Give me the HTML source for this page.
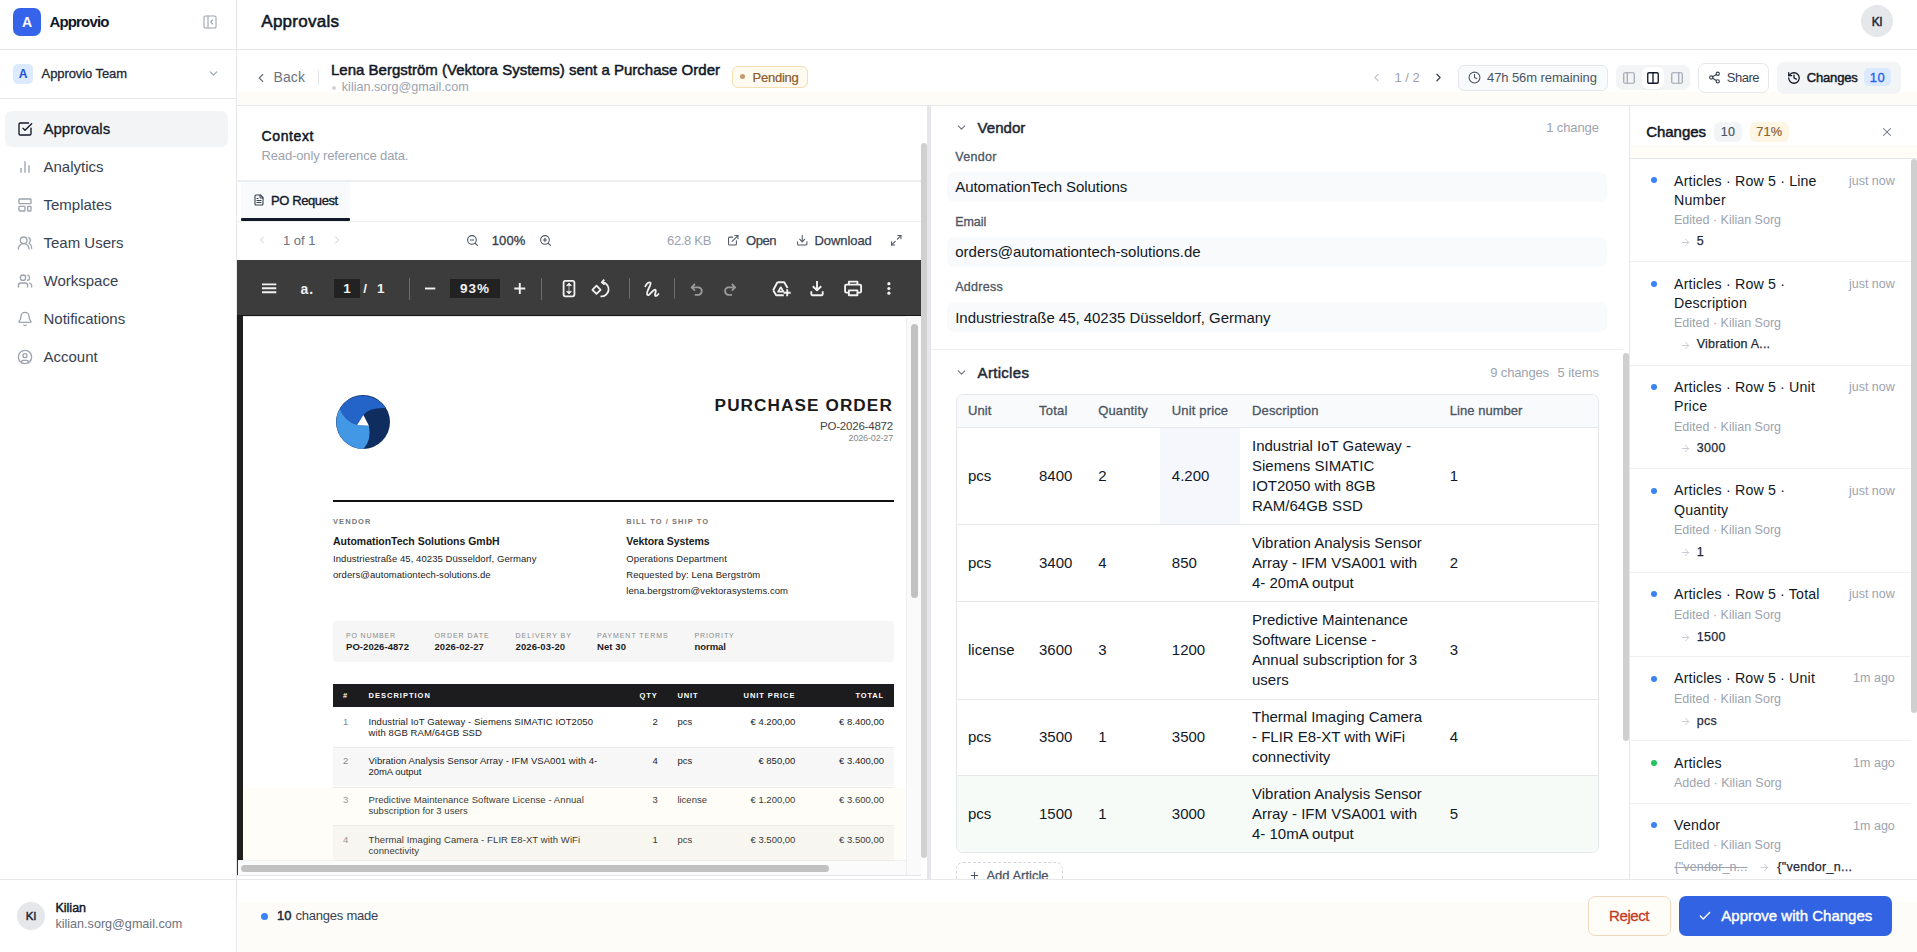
<!DOCTYPE html>
<html><head><meta charset="utf-8"><title>Approvio</title>
<style>
html,body{margin:0;padding:0;}
body{width:1917px;height:952px;position:relative;overflow:hidden;background:#fff;font-family:"Liberation Sans",sans-serif;}
.t{position:absolute;white-space:nowrap;line-height:1;}
.b{position:absolute;}
.i{position:absolute;overflow:visible;}
</style></head><body>
<div class="b" style="left:236px;top:0px;width:1px;height:952px;background:#e5e7eb;"></div>
<div class="b" style="left:13px;top:8px;width:28px;height:28px;background:#3563e9;border-radius:7px;"></div>
<div class="t" style="left:21.94px;top:15.15px;font-size:14px;color:#fff;font-weight:700;">A</div>
<div class="t" style="left:49.50px;top:14.30px;font-size:15px;color:#111827;font-weight:700;letter-spacing:-0.854px;">Approvio</div>
<svg class="i" style="left:202px;top:14px;" width="16" height="16" viewBox="0 0 24 24" fill="none" stroke="#9ca3af" stroke-width="1.6" stroke-linecap="round" stroke-linejoin="round"><rect width="18" height="18" x="3" y="3" rx="2"/><path d="M9 3v18"/><path d="m16 15-3-3 3-3"/></svg>
<div class="b" style="left:0px;top:49px;width:236px;height:1px;background:#e5e7eb;"></div>
<div class="b" style="left:13px;top:64px;width:20px;height:20px;background:#dbeafe;border-radius:5px;"></div>
<div class="t" style="left:18.67px;top:68.34px;font-size:12px;color:#1d4ed8;font-weight:700;">A</div>
<div class="t" style="left:41.60px;top:67.30px;font-size:13px;color:#1f2937;letter-spacing:-0.083px;-webkit-text-stroke:0.3px #1f2937;">Approvio Team</div>
<svg class="i" style="left:207px;top:67px;" width="13" height="13" viewBox="0 0 24 24" fill="none" stroke="#9ca3af" stroke-width="2" stroke-linecap="round" stroke-linejoin="round"><path d="m6 9 6 6 6-6"/></svg>
<div class="b" style="left:0px;top:98px;width:236px;height:1px;background:#e5e7eb;"></div>
<div class="b" style="left:5px;top:111px;width:223px;height:35.5px;background:#f3f4f6;border-radius:7px;"></div>
<svg class="i" style="left:16.5px;top:121px;" width="16" height="16" viewBox="0 0 24 24" fill="none" stroke="#111827" stroke-width="2" stroke-linecap="round" stroke-linejoin="round"><path d="M21 10.656V19a2 2 0 0 1-2 2H5a2 2 0 0 1-2-2V5a2 2 0 0 1 2-2h12.344"/><path d="m9 11 3 3L22 4"/></svg>
<div class="t" style="left:43.50px;top:120.70px;font-size:15px;color:#111827;-webkit-text-stroke:0.3px #111827;">Approvals</div>
<svg class="i" style="left:16.5px;top:159px;" width="16" height="16" viewBox="0 0 24 24" fill="none" stroke="#9ca3af" stroke-width="2" stroke-linecap="round" stroke-linejoin="round"><line x1="18" y1="20" x2="18" y2="10"/><line x1="12" y1="20" x2="12" y2="4"/><line x1="6" y1="20" x2="6" y2="14"/></svg>
<div class="t" style="left:43.50px;top:158.70px;font-size:15px;color:#374151;">Analytics</div>
<svg class="i" style="left:16.5px;top:197px;" width="16" height="16" viewBox="0 0 24 24" fill="none" stroke="#9ca3af" stroke-width="2" stroke-linecap="round" stroke-linejoin="round"><rect width="18" height="7" x="3" y="3" rx="1"/><rect width="9" height="7" x="3" y="14" rx="1"/><rect width="5" height="7" x="16" y="14" rx="1"/></svg>
<div class="t" style="left:43.50px;top:196.70px;font-size:15px;color:#374151;">Templates</div>
<svg class="i" style="left:16.5px;top:235px;" width="16" height="16" viewBox="0 0 24 24" fill="none" stroke="#9ca3af" stroke-width="2" stroke-linecap="round" stroke-linejoin="round"><path d="M18 21a8 8 0 0 0-16 0"/><circle cx="10" cy="8" r="5"/><path d="M22 20c0-3.37-2-6.5-4-8a5 5 0 0 0-.45-8.3"/></svg>
<div class="t" style="left:43.50px;top:234.70px;font-size:15px;color:#374151;">Team Users</div>
<svg class="i" style="left:16.5px;top:273px;" width="16" height="16" viewBox="0 0 24 24" fill="none" stroke="#9ca3af" stroke-width="2" stroke-linecap="round" stroke-linejoin="round"><path d="M16 21v-2a4 4 0 0 0-4-4H6a4 4 0 0 0-4 4v2"/><circle cx="9" cy="7" r="4"/><path d="M22 21v-2a4 4 0 0 0-3-3.87"/><path d="M16 3.13a4 4 0 0 1 0 7.75"/></svg>
<div class="t" style="left:43.50px;top:272.70px;font-size:15px;color:#374151;">Workspace</div>
<svg class="i" style="left:16.5px;top:311px;" width="16" height="16" viewBox="0 0 24 24" fill="none" stroke="#9ca3af" stroke-width="2" stroke-linecap="round" stroke-linejoin="round"><path d="M10.268 21a2 2 0 0 0 3.464 0"/><path d="M3.262 15.326A1 1 0 0 0 4 17h16a1 1 0 0 0 .74-1.673C19.41 13.956 18 12.499 18 8A6 6 0 0 0 6 8c0 4.499-1.411 5.956-2.738 7.326"/></svg>
<div class="t" style="left:43.50px;top:310.70px;font-size:15px;color:#374151;">Notifications</div>
<svg class="i" style="left:16.5px;top:349px;" width="16" height="16" viewBox="0 0 24 24" fill="none" stroke="#9ca3af" stroke-width="2" stroke-linecap="round" stroke-linejoin="round"><circle cx="12" cy="12" r="10"/><circle cx="12" cy="10" r="3"/><path d="M7 20.662V19a2 2 0 0 1 2-2h6a2 2 0 0 1 2 2v1.662"/></svg>
<div class="t" style="left:43.50px;top:348.70px;font-size:15px;color:#374151;">Account</div>
<div class="b" style="left:0px;top:879px;width:236px;height:1px;background:#e5e7eb;"></div>
<div class="b" style="left:17px;top:902px;width:28px;height:28px;background:#e5e7eb;border-radius:50%;"></div>
<div class="t" style="left:25.70px;top:910.87px;font-size:11.5px;color:#1f2937;letter-spacing:-0.133px;-webkit-text-stroke:0.45px #1f2937;">KI</div>
<div class="t" style="left:55.40px;top:902.32px;font-size:12.5px;color:#111827;letter-spacing:0.021px;-webkit-text-stroke:0.45px #111827;">Kilian</div>
<div class="t" style="left:55.40px;top:917.83px;font-size:12.6px;color:#6b7280;">kilian.sorg@gmail.com</div>
<div class="b" style="left:237px;top:49px;width:1680px;height:1px;background:#e5e7eb;"></div>
<div class="t" style="left:261.30px;top:12.71px;font-size:17px;color:#111827;letter-spacing:0.267px;-webkit-text-stroke:0.55px #111827;">Approvals</div>
<div class="b" style="left:1861px;top:5px;width:32px;height:32px;background:#e5e7eb;border-radius:50%;"></div>
<div class="t" style="left:1871.75px;top:15.74px;font-size:12px;color:#1f2937;letter-spacing:-0.419px;-webkit-text-stroke:0.45px #1f2937;">KI</div>
<div class="b" style="left:238px;top:92px;width:1679px;height:13px;background:#fefcf7;"></div>
<div class="b" style="left:237px;top:105px;width:1680px;height:1px;background:#e5e7eb;"></div>
<svg class="i" style="left:253.5px;top:71px;" width="14" height="14" viewBox="0 0 24 24" fill="none" stroke="#6b7280" stroke-width="2" stroke-linecap="round" stroke-linejoin="round"><path d="m15 18-6-6 6-6"/></svg>
<div class="t" style="left:273.50px;top:70.45px;font-size:14px;color:#6b7280;letter-spacing:0.094px;">Back</div>
<div class="b" style="left:318px;top:70px;width:1px;height:15px;background:#e5e7eb;"></div>
<div class="t" style="left:331.00px;top:61.50px;font-size:15px;color:#111827;letter-spacing:0.009px;-webkit-text-stroke:0.5px #111827;">Lena Bergström (Vektora Systems) sent a Purchase Order</div>
<div class="b" style="left:332px;top:86px;width:4px;height:4px;background:#d1d5db;border-radius:50%;"></div>
<div class="t" style="left:341.80px;top:80.93px;font-size:12.6px;color:#9ca3af;">kilian.sorg@gmail.com</div>
<div class="b" style="left:731.5px;top:66px;width:76.5px;height:22px;background:#fefaf0;border:1px solid #f6dfb0;border-radius:6px;box-sizing:border-box;"></div>
<div class="b" style="left:740px;top:74px;width:5px;height:5px;background:#c59a6a;border-radius:50%;"></div>
<div class="t" style="left:752.50px;top:70.80px;font-size:13px;color:#8a5a2b;letter-spacing:-0.244px;-webkit-text-stroke:0.2px #8a5a2b;">Pending</div>
<svg class="i" style="left:1370px;top:71px;" width="13" height="13" viewBox="0 0 24 24" fill="none" stroke="#c0c4cc" stroke-width="2" stroke-linecap="round" stroke-linejoin="round"><path d="m15 18-6-6 6-6"/></svg>
<div class="t" style="left:1394.60px;top:71.00px;font-size:13px;color:#9ca3af;letter-spacing:-0.039px;">1 / 2</div>
<svg class="i" style="left:1432px;top:71px;" width="13" height="13" viewBox="0 0 24 24" fill="none" stroke="#374151" stroke-width="2.2" stroke-linecap="round" stroke-linejoin="round"><path d="m9 18 6-6-6-6"/></svg>
<div class="b" style="left:1458px;top:64.5px;width:150px;height:26.0px;background:#f9fafb;border:1px solid #e5e7eb;border-radius:6px;box-sizing:border-box;"></div>
<svg class="i" style="left:1467.5px;top:70.5px;" width="13" height="13" viewBox="0 0 24 24" fill="none" stroke="#4b5563" stroke-width="2" stroke-linecap="round" stroke-linejoin="round"><circle cx="12" cy="12" r="10"/><polyline points="12 6 12 12 16 14"/></svg>
<div class="t" style="left:1487.00px;top:71.00px;font-size:13px;color:#4b5563;letter-spacing:-0.088px;">47h 56m remaining</div>
<div class="b" style="left:1616px;top:65px;width:74px;height:25px;background:#f3f4f6;border-radius:7px;"></div>
<div class="b" style="left:1642px;top:67px;width:22px;height:21.5px;background:#fff;border-radius:6px;box-shadow:0 1px 1px rgba(0,0,0,.04);"></div>
<svg class="i" style="left:1622px;top:70.5px;" width="14" height="14" viewBox="0 0 24 24" fill="none" stroke="#9ca3af" stroke-width="2" stroke-linecap="round" stroke-linejoin="round"><rect width="18" height="18" x="3" y="3" rx="2"/><path d="M9 3v18"/></svg>
<svg class="i" style="left:1646px;top:70.5px;" width="14" height="14" viewBox="0 0 24 24" fill="none" stroke="#111827" stroke-width="2.3" stroke-linecap="round" stroke-linejoin="round"><rect width="18" height="18" x="3" y="3" rx="2"/><path d="M12 3v18"/></svg>
<svg class="i" style="left:1670px;top:70.5px;" width="14" height="14" viewBox="0 0 24 24" fill="none" stroke="#9ca3af" stroke-width="2" stroke-linecap="round" stroke-linejoin="round"><rect width="18" height="18" x="3" y="3" rx="2"/><path d="M15 3v18"/></svg>
<div class="b" style="left:1698px;top:62.5px;width:70.5px;height:30.0px;background:#fff;border:1px solid #e5e7eb;border-radius:7px;box-sizing:border-box;"></div>
<svg class="i" style="left:1707.5px;top:70.5px;" width="13" height="13" viewBox="0 0 24 24" fill="none" stroke="#374151" stroke-width="2" stroke-linecap="round" stroke-linejoin="round"><circle cx="18" cy="5" r="3"/><circle cx="6" cy="12" r="3"/><circle cx="18" cy="19" r="3"/><line x1="8.59" x2="15.42" y1="13.51" y2="17.49"/><line x1="15.41" x2="8.59" y1="6.51" y2="10.49"/></svg>
<div class="t" style="left:1726.70px;top:71.00px;font-size:13px;color:#374151;letter-spacing:-0.478px;">Share</div>
<div class="b" style="left:1777px;top:62px;width:124px;height:31.5px;background:#f3f4f6;border-radius:7px;"></div>
<svg class="i" style="left:1786.5px;top:70.5px;" width="14" height="14" viewBox="0 0 24 24" fill="none" stroke="#111827" stroke-width="2.2" stroke-linecap="round" stroke-linejoin="round"><path d="M3 12a9 9 0 1 0 9-9 9.75 9.75 0 0 0-6.74 2.74L3 8"/><path d="M3 3v5h5"/><path d="M12 7v5l4 2"/></svg>
<div class="t" style="left:1806.80px;top:71.00px;font-size:13px;color:#111827;letter-spacing:-0.177px;-webkit-text-stroke:0.45px #111827;">Changes</div>
<div class="b" style="left:1864px;top:68px;width:27px;height:18px;background:#dbeafe;border-radius:5px;"></div>
<div class="t" style="left:1869.75px;top:70.80px;font-size:13px;color:#2563eb;letter-spacing:0.520px;-webkit-text-stroke:0.35px #2563eb;">10</div>
<!--MAIN-->
<div class="t" style="left:261.50px;top:129.15px;font-size:14px;color:#111827;letter-spacing:0.622px;-webkit-text-stroke:0.5px #111827;">Context</div>
<div class="t" style="left:261.50px;top:148.80px;font-size:13px;color:#9ca3af;letter-spacing:-0.141px;">Read-only reference data.</div>
<div class="b" style="left:237px;top:180px;width:684px;height:2px;background:#eceef1;"></div>
<div class="b" style="left:241px;top:182px;width:109px;height:36px;background:#f9fafb;"></div>
<div class="b" style="left:241px;top:218.3px;width:109px;height:2.299999999999983px;background:#111827;border-radius:1px;"></div>
<div class="b" style="left:237px;top:221px;width:684px;height:1px;background:#eef0f2;"></div>
<svg class="i" style="left:252.5px;top:193.5px;" width="12" height="12" viewBox="0 0 24 24" fill="none" stroke="#374151" stroke-width="2.2" stroke-linecap="round" stroke-linejoin="round"><path d="M15 2H6a2 2 0 0 0-2 2v16a2 2 0 0 0 2 2h12a2 2 0 0 0 2-2V7Z"/><path d="M14 2v4a2 2 0 0 0 2 2h4"/><path d="M10 9H8"/><path d="M16 13H8"/><path d="M16 17H8"/></svg>
<div class="t" style="left:271.00px;top:193.50px;font-size:13px;color:#111827;letter-spacing:-0.402px;-webkit-text-stroke:0.35px #111827;">PO Request</div>
<svg class="i" style="left:256px;top:234px;" width="12" height="12" viewBox="0 0 24 24" fill="none" stroke="#c5c9d0" stroke-width="2" stroke-linecap="round" stroke-linejoin="round"><path d="m15 18-6-6 6-6"/></svg>
<div class="t" style="left:283.00px;top:233.60px;font-size:13px;color:#6b7280;letter-spacing:-0.004px;">1 of 1</div>
<svg class="i" style="left:331px;top:234px;" width="12" height="12" viewBox="0 0 24 24" fill="none" stroke="#c5c9d0" stroke-width="2" stroke-linecap="round" stroke-linejoin="round"><path d="m9 18 6-6-6-6"/></svg>
<svg class="i" style="left:465.5px;top:233.5px;" width="13" height="13" viewBox="0 0 24 24" fill="none" stroke="#4b5563" stroke-width="2" stroke-linecap="round" stroke-linejoin="round"><circle cx="11" cy="11" r="8"/><line x1="21" x2="16.65" y1="21" y2="16.65"/><line x1="8" x2="14" y1="11" y2="11"/></svg>
<div class="t" style="left:491.70px;top:233.60px;font-size:13px;color:#374151;letter-spacing:0.138px;-webkit-text-stroke:0.35px #374151;">100%</div>
<svg class="i" style="left:539px;top:233.5px;" width="13" height="13" viewBox="0 0 24 24" fill="none" stroke="#4b5563" stroke-width="2" stroke-linecap="round" stroke-linejoin="round"><circle cx="11" cy="11" r="8"/><line x1="21" x2="16.65" y1="21" y2="16.65"/><line x1="8" x2="14" y1="11" y2="11"/><line x1="11" x2="11" y1="8" y2="14"/></svg>
<div class="t" style="left:667.00px;top:233.60px;font-size:13px;color:#9ca3af;letter-spacing:-0.322px;">62.8 KB</div>
<svg class="i" style="left:727px;top:233.5px;" width="12.5" height="12.5" viewBox="0 0 24 24" fill="none" stroke="#4b5563" stroke-width="2" stroke-linecap="round" stroke-linejoin="round"><path d="M15 3h6v6"/><path d="M10 14 21 3"/><path d="M18 13v6a2 2 0 0 1-2 2H5a2 2 0 0 1-2-2V8a2 2 0 0 1 2-2h6"/></svg>
<div class="t" style="left:746.00px;top:233.60px;font-size:13px;color:#374151;letter-spacing:-0.451px;-webkit-text-stroke:0.25px #374151;">Open</div>
<svg class="i" style="left:796px;top:233.5px;" width="12.5" height="12.5" viewBox="0 0 24 24" fill="none" stroke="#4b5563" stroke-width="2" stroke-linecap="round" stroke-linejoin="round"><path d="M21 15v4a2 2 0 0 1-2 2H5a2 2 0 0 1-2-2v-4"/><polyline points="7 10 12 15 17 10"/><line x1="12" x2="12" y1="15" y2="3"/></svg>
<div class="t" style="left:814.50px;top:233.60px;font-size:13px;color:#374151;letter-spacing:-0.077px;-webkit-text-stroke:0.25px #374151;">Download</div>
<svg class="i" style="left:890px;top:234px;" width="12.5" height="12.5" viewBox="0 0 24 24" fill="none" stroke="#4b5563" stroke-width="2" stroke-linecap="round" stroke-linejoin="round"><polyline points="15 3 21 3 21 9"/><polyline points="9 21 3 21 3 15"/><line x1="21" x2="14" y1="3" y2="10"/><line x1="3" x2="10" y1="21" y2="14"/></svg>
<div class="b" style="left:920.8px;top:142.5px;width:6.0px;height:715.5px;background:#d0d0d0;border-radius:3px;"></div>
<div class="b" style="left:927px;top:105px;width:4px;height:774px;background:#e6e7ea;"></div>
<div class="b" style="left:237px;top:260px;width:684px;height:56px;background:#3c3c3c;"></div>
<div class="b" style="left:237px;top:315px;width:684px;height:1px;background:#171717;"></div>
<div class="b" style="left:237px;top:316px;width:684px;height:560px;background:#f7f8f9;"></div>
<div class="b" style="left:237px;top:316px;width:6px;height:544px;background:#1f1f1f;"></div>
<div class="b" style="left:243px;top:316px;width:663px;height:544px;background:#ffffff;overflow:hidden;"></div>
<div class="b" style="left:243px;top:316px;width:663px;height:1px;background:rgba(60,60,80,0.12);"></div>
<div class="b" style="left:906px;top:318px;width:15px;height:558px;background:#fafafa;border-left:1px solid #eceef0;box-sizing:border-box;"></div>
<div class="b" style="left:910.5px;top:323.5px;width:7.5px;height:274.5px;background:#c1c1c1;border-radius:4px;"></div>
<div class="b" style="left:237px;top:860px;width:669px;height:16px;background:#fbfbfb;border-top:1px solid #eeeff1;box-sizing:border-box;"></div>
<div class="b" style="left:237px;top:860px;width:1px;height:15px;background:#333;"></div>
<div class="b" style="left:241px;top:864.5px;width:588px;height:7.7000000000000455px;background:#c1c1c1;border-radius:4px;"></div>
<div class="b" style="left:237px;top:875px;width:684px;height:1px;background:#e3e5e8;"></div>
<svg class="i" style="left:237px;top:260px" width="684" height="56" viewBox="237 260 684 56" fill="none" stroke="#f1f1f1" stroke-width="1.9" stroke-linecap="butt" stroke-linejoin="round"><path d="M262 284.4h14.3M262 288.3h14.3M262 292.3h14.3" stroke-width="1.9"/><rect x="563.6" y="280.8" width="10.8" height="15.5" rx="1.8" stroke-width="1.8"/><path d="M566.6 285.6 569 283 571.4 285.6Z M566.6 291.4 569 294 571.4 291.4Z" fill="#f1f1f1" stroke-width="0.8"/><path d="M569 286v5" stroke="#8a8a8a" stroke-width="1.6"/><path d="M592.4 289.8 596.5 285.7 600.6 289.8 596.5 293.9Z" stroke-width="1.8"/><path d="M602.5 282.2A7 7 0 1 1 600.5 296.3" stroke-width="1.8"/><path d="M604.3 279.6 601.8 282.3 604.6 284.6" stroke-width="1.8"/><path d="M629.5 278v20.7M674.5 278v20.7" stroke="#6d6d6d" stroke-width="1"/><path d="M645.3 286.3C647 283 649.5 281.5 650.5 282.8 651.8 284.6 645.5 292 647.3 294.8 648.8 297 653 289.3 655 289.6 657.5 290 653.5 295.8 655.6 296 656.8 296.1 657.8 295 658.5 294" stroke-width="1.8" stroke-linecap="round"/><path d="M695 283.9 691.6 287.3 695 290.6M691.8 287.3H699a4 4 0 0 1 0 7.6h-4.2" stroke="#9a9a9a" stroke-width="1.8"/><path d="M731.8 283.9 735.2 287.3 731.8 290.6M735 287.3H727.8a4 4 0 0 0 0 7.6h4.2" stroke="#9a9a9a" stroke-width="1.8"/><path d="M777.4 282.3H784.2L787.6 288M773.2 290.2 777.4 282.3M773.2 290.2 776.2 295.3H783.8" stroke-width="1.9"/><path d="M780.8 287.3 783.5 291.7H778.1Z" stroke-width="1.7"/><path d="M787.2 289.3v7M783.7 292.8h7" stroke-width="1.9"/><path d="M817 281.1v9M812.8 286.3 817 290.3 821.2 286.3" stroke-width="1.9"/><path d="M811.3 291.3v2.6a1.3 1.3 0 0 0 1.3 1.3h8.8a1.3 1.3 0 0 0 1.3-1.3v-2.6" stroke-width="1.9"/><path d="M848.9 284.6V281.6H857.4V284.6" stroke-width="1.9"/><path d="M848.6 292.6H846.4a1.3 1.3 0 0 1-1.3-1.3V286a1.3 1.3 0 0 1 1.3-1.4h13.4a1.3 1.3 0 0 1 1.3 1.4v5.3a1.3 1.3 0 0 1-1.3 1.3H857.6" stroke-width="1.9"/><rect x="848.9" y="290.4" width="8.5" height="4.8" stroke-width="1.9"/><circle cx="888.9" cy="283.7" r="1.6" fill="#f1f1f1" stroke="none"/><circle cx="888.9" cy="288.5" r="1.6" fill="#f1f1f1" stroke="none"/><circle cx="888.9" cy="293.2" r="1.6" fill="#f1f1f1" stroke="none"/><path d="M425 288.5h10.3" stroke-width="1.9"/><path d="M519.8 283v11M514.3 288.5h11" stroke-width="1.9"/></svg>
<div class="t" style="left:300.50px;top:281.95px;font-size:14px;color:#f1f1f1;font-weight:700;letter-spacing:0.912px;">a.</div>
<div class="b" style="left:334px;top:278.5px;width:26px;height:19.69999999999999px;background:#222;"></div>
<div class="t" style="left:343.25px;top:282.37px;font-size:13.5px;color:#f1f1f1;font-weight:700;">1</div>
<div class="t" style="left:363.30px;top:282.37px;font-size:13.5px;color:#f1f1f1;font-weight:700;">/</div>
<div class="t" style="left:377.00px;top:282.37px;font-size:13.5px;color:#f1f1f1;font-weight:700;">1</div>
<div class="b" style="left:409.3px;top:278px;width:1.0px;height:21.69999999999999px;background:#6d6d6d;"></div>
<div class="b" style="left:450px;top:278.5px;width:50px;height:19.69999999999999px;background:#222;"></div>
<div class="t" style="left:460.00px;top:282.37px;font-size:13.5px;color:#f1f1f1;font-weight:700;letter-spacing:0.993px;">93%</div>
<div class="b" style="left:540.5px;top:278px;width:1.0px;height:21.69999999999999px;background:#6d6d6d;"></div>
<!--PDFPAGE-->
<svg class="i" style="left:335.8px;top:394.9px" width="54" height="54" viewBox="0 0 54 54"><circle cx="27" cy="27" r="27" fill="#0f2d5e"/><path d="M3.8 13.7 A27 27 0 0 1 49.5 13.0 Q32.95 12.5 27.4 20.0 L21.1 29.9 Q8.55 26.2 3.8 13.7Z" fill="#2463c7"/><path d="M3.8 13.7 Q8.55 26.2 21.1 29.9 L32.9 30.7 Q35.65 45.3 27.4 53.9 A27 27 0 0 1 3.8 13.7Z" fill="#4398e6"/><path d="M21.1 29.9 L27.4 20.0 L32.9 30.7Z" fill="#fff"/></svg>
<div class="t" style="left:714.60px;top:396.84px;font-size:17.2px;color:#1a1a1a;font-weight:700;letter-spacing:1.070px;">PURCHASE ORDER</div>
<div class="t" style="left:820.00px;top:421.07px;font-size:11.5px;color:#444;letter-spacing:-0.204px;">PO-2026-4872</div>
<div class="t" style="left:848.60px;top:434.18px;font-size:9px;color:#888;letter-spacing:-0.164px;">2026-02-27</div>
<div class="b" style="left:333px;top:499.8px;width:561px;height:2.0px;background:#111;"></div>
<div class="t" style="left:333.00px;top:517.95px;font-size:7.5px;color:#777;font-weight:700;letter-spacing:1.069px;">VENDOR</div>
<div class="t" style="left:626.30px;top:517.95px;font-size:7.5px;color:#777;font-weight:700;letter-spacing:1.054px;">BILL TO / SHIP TO</div>
<div class="t" style="left:333.00px;top:535.71px;font-size:10.5px;color:#1a1a1a;font-weight:700;letter-spacing:-0.021px;">AutomationTech Solutions GmbH</div>
<div class="t" style="left:333.00px;top:553.56px;font-size:9.5px;color:#222;letter-spacing:0.063px;">Industriestraße 45, 40235 Düsseldorf, Germany</div>
<div class="t" style="left:333.00px;top:569.86px;font-size:9.5px;color:#222;letter-spacing:0.065px;">orders@automationtech-solutions.de</div>
<div class="t" style="left:626.30px;top:535.71px;font-size:10.5px;color:#1a1a1a;font-weight:700;letter-spacing:-0.050px;">Vektora Systems</div>
<div class="t" style="left:626.30px;top:553.56px;font-size:9.5px;color:#222;letter-spacing:0.088px;">Operations Department</div>
<div class="t" style="left:626.30px;top:569.86px;font-size:9.5px;color:#222;letter-spacing:0.089px;">Requested by: Lena Bergström</div>
<div class="t" style="left:626.30px;top:586.16px;font-size:9.5px;color:#222;letter-spacing:0.067px;">lena.bergstrom@vektorasystems.com</div>
<div class="b" style="left:333px;top:621px;width:561px;height:40.5px;background:#f6f6f7;border-radius:4px;"></div>
<div class="t" style="left:346.00px;top:631.67px;font-size:7px;color:#8a8a8a;letter-spacing:0.845px;">PO NUMBER</div>
<div class="t" style="left:346.00px;top:641.56px;font-size:9.5px;color:#1a1a1a;font-weight:700;letter-spacing:0.056px;">PO-2026-4872</div>
<div class="t" style="left:434.40px;top:631.67px;font-size:7px;color:#8a8a8a;letter-spacing:0.993px;">ORDER DATE</div>
<div class="t" style="left:434.40px;top:641.56px;font-size:9.5px;color:#1a1a1a;font-weight:700;letter-spacing:0.090px;">2026-02-27</div>
<div class="t" style="left:515.50px;top:631.67px;font-size:7px;color:#8a8a8a;letter-spacing:0.977px;">DELIVERY BY</div>
<div class="t" style="left:515.50px;top:641.56px;font-size:9.5px;color:#1a1a1a;font-weight:700;letter-spacing:0.110px;">2026-03-20</div>
<div class="t" style="left:597.00px;top:631.67px;font-size:7px;color:#8a8a8a;letter-spacing:0.977px;">PAYMENT TERMS</div>
<div class="t" style="left:597.00px;top:641.56px;font-size:9.5px;color:#1a1a1a;font-weight:700;letter-spacing:0.081px;">Net 30</div>
<div class="t" style="left:694.40px;top:631.67px;font-size:7px;color:#8a8a8a;letter-spacing:0.905px;">PRIORITY</div>
<div class="t" style="left:694.40px;top:641.56px;font-size:9.5px;color:#1a1a1a;font-weight:700;letter-spacing:-0.012px;">normal</div>
<div class="b" style="left:333px;top:684px;width:561px;height:23.200000000000045px;background:#1c1c1f;"></div>
<div class="t" style="left:343.00px;top:692.15px;font-size:7.5px;color:#ffffff;font-weight:700;">#</div>
<div class="t" style="left:368.50px;top:692.15px;font-size:7.5px;color:#ffffff;font-weight:700;letter-spacing:1.013px;">DESCRIPTION</div>
<div class="t" style="left:639.40px;top:692.15px;font-size:7.5px;color:#ffffff;font-weight:700;letter-spacing:0.994px;">QTY</div>
<div class="t" style="left:677.40px;top:692.15px;font-size:7.5px;color:#ffffff;font-weight:700;letter-spacing:0.926px;">UNIT</div>
<div class="t" style="left:743.60px;top:692.15px;font-size:7.5px;color:#ffffff;font-weight:700;letter-spacing:0.930px;">UNIT PRICE</div>
<div class="t" style="left:855.50px;top:692.15px;font-size:7.5px;color:#ffffff;font-weight:700;letter-spacing:0.840px;">TOTAL</div>
<div class="b" style="left:333px;top:707.2px;width:561px;height:39.39999999999998px;background:#ffffff;"></div>
<div class="b" style="left:333px;top:746.6px;width:561px;height:1.0px;background:#ececee;"></div>
<div class="t" style="left:343.00px;top:716.96px;font-size:9.5px;color:#888;">1</div>
<div class="t" style="left:368.50px;top:716.96px;font-size:9.5px;color:#222;letter-spacing:0.087px;">Industrial IoT Gateway - Siemens SIMATIC IOT2050</div>
<div class="t" style="left:368.50px;top:727.96px;font-size:9.5px;color:#222;letter-spacing:0.100px;">with 8GB RAM/64GB SSD</div>
<div class="t" style="left:652.52px;top:716.96px;font-size:9.5px;color:#222;">2</div>
<div class="t" style="left:677.40px;top:716.96px;font-size:9.5px;color:#222;">pcs</div>
<div class="t" style="left:750.50px;top:716.96px;font-size:9.5px;color:#222;">€ 4.200,00</div>
<div class="t" style="left:839.10px;top:716.96px;font-size:9.5px;color:#222;">€ 8.400,00</div>
<div class="b" style="left:333px;top:747.6px;width:561px;height:38.89999999999998px;background:#f7f7f8;"></div>
<div class="b" style="left:333px;top:786.5px;width:561px;height:1.0px;background:#ececee;"></div>
<div class="t" style="left:343.00px;top:755.56px;font-size:9.5px;color:#888;">2</div>
<div class="t" style="left:368.50px;top:755.56px;font-size:9.5px;color:#222;letter-spacing:0.068px;">Vibration Analysis Sensor Array - IFM VSA001 with 4-</div>
<div class="t" style="left:368.50px;top:766.56px;font-size:9.5px;color:#222;letter-spacing:-0.050px;">20mA output</div>
<div class="t" style="left:652.52px;top:755.56px;font-size:9.5px;color:#222;">4</div>
<div class="t" style="left:677.40px;top:755.56px;font-size:9.5px;color:#222;">pcs</div>
<div class="t" style="left:758.42px;top:755.56px;font-size:9.5px;color:#222;">€ 850,00</div>
<div class="t" style="left:839.10px;top:755.56px;font-size:9.5px;color:#222;">€ 3.400,00</div>
<div class="b" style="left:333px;top:787.5px;width:561px;height:37.700000000000045px;background:#ffffff;"></div>
<div class="b" style="left:333px;top:825.2px;width:561px;height:1.0px;background:#ececee;"></div>
<div class="t" style="left:343.00px;top:794.76px;font-size:9.5px;color:#888;">3</div>
<div class="t" style="left:368.50px;top:794.76px;font-size:9.5px;color:#222;letter-spacing:0.076px;">Predictive Maintenance Software License - Annual</div>
<div class="t" style="left:368.50px;top:805.76px;font-size:9.5px;color:#222;letter-spacing:0.045px;">subscription for 3 users</div>
<div class="t" style="left:652.52px;top:794.76px;font-size:9.5px;color:#222;">3</div>
<div class="t" style="left:677.40px;top:794.76px;font-size:9.5px;color:#222;">license</div>
<div class="t" style="left:750.50px;top:794.76px;font-size:9.5px;color:#222;">€ 1.200,00</div>
<div class="t" style="left:839.10px;top:794.76px;font-size:9.5px;color:#222;">€ 3.600,00</div>
<div class="b" style="left:333px;top:826.2px;width:561px;height:33.799999999999955px;background:#f7f7f8;"></div>
<div class="b" style="left:333px;top:860px;width:561px;height:1px;background:#ececee;"></div>
<div class="t" style="left:343.00px;top:834.56px;font-size:9.5px;color:#888;">4</div>
<div class="t" style="left:368.50px;top:834.56px;font-size:9.5px;color:#222;letter-spacing:0.098px;">Thermal Imaging Camera - FLIR E8-XT with WiFi</div>
<div class="t" style="left:368.50px;top:845.56px;font-size:9.5px;color:#222;letter-spacing:0.072px;">connectivity</div>
<div class="t" style="left:652.52px;top:834.56px;font-size:9.5px;color:#222;">1</div>
<div class="t" style="left:677.40px;top:834.56px;font-size:9.5px;color:#222;">pcs</div>
<div class="t" style="left:750.50px;top:834.56px;font-size:9.5px;color:#222;">€ 3.500,00</div>
<div class="t" style="left:839.10px;top:834.56px;font-size:9.5px;color:#222;">€ 3.500,00</div>
<div class="b" style="left:243px;top:788px;width:663px;height:72px;background:rgba(250,240,200,0.12);"></div>
<!--MIDDLE-->
<svg class="i" style="left:955px;top:121px;" width="13" height="13" viewBox="0 0 24 24" fill="none" stroke="#6b7280" stroke-width="2" stroke-linecap="round" stroke-linejoin="round"><path d="m6 9 6 6 6-6"/></svg>
<div class="t" style="left:977.60px;top:120.30px;font-size:15px;color:#1f2937;letter-spacing:0.043px;-webkit-text-stroke:0.5px #1f2937;">Vendor</div>
<div class="t" style="left:1546.20px;top:120.80px;font-size:13px;color:#9ca3af;letter-spacing:-0.112px;">1 change</div>
<div class="t" style="left:955.20px;top:151.22px;font-size:12.5px;color:#4b5563;letter-spacing:0.330px;-webkit-text-stroke:0.3px #4b5563;">Vendor</div>
<div class="b" style="left:947px;top:171.7px;width:660px;height:30.5px;background:#f9fafb;border-radius:7px;"></div>
<div class="t" style="left:955.20px;top:179.30px;font-size:15px;color:#111827;letter-spacing:-0.060px;">AutomationTech Solutions</div>
<div class="t" style="left:955.20px;top:216.32px;font-size:12.5px;color:#4b5563;letter-spacing:-0.052px;-webkit-text-stroke:0.3px #4b5563;">Email</div>
<div class="b" style="left:947px;top:236.8px;width:660px;height:30.5px;background:#f9fafb;border-radius:7px;"></div>
<div class="t" style="left:955.20px;top:244.40px;font-size:15px;color:#111827;letter-spacing:0.004px;">orders@automationtech-solutions.de</div>
<div class="t" style="left:955.20px;top:281.42px;font-size:12.5px;color:#4b5563;letter-spacing:0.278px;-webkit-text-stroke:0.3px #4b5563;">Address</div>
<div class="b" style="left:947px;top:302.3px;width:660px;height:30.099999999999966px;background:#f9fafb;border-radius:7px;"></div>
<div class="t" style="left:955.20px;top:309.90px;font-size:15px;color:#111827;letter-spacing:-0.034px;">Industriestraße 45, 40235 Düsseldorf, Germany</div>
<div class="b" style="left:931px;top:349px;width:692px;height:1px;background:#eceef1;"></div>
<div class="b" style="left:1623px;top:353px;width:6px;height:387.5px;background:#cfcfcf;border-radius:3px;"></div>
<svg class="i" style="left:955px;top:366px;" width="13" height="13" viewBox="0 0 24 24" fill="none" stroke="#6b7280" stroke-width="2" stroke-linecap="round" stroke-linejoin="round"><path d="m6 9 6 6 6-6"/></svg>
<div class="t" style="left:977.60px;top:364.90px;font-size:15px;color:#1f2937;letter-spacing:0.303px;-webkit-text-stroke:0.5px #1f2937;">Articles</div>
<div class="t" style="left:1490.20px;top:365.50px;font-size:13px;color:#9ca3af;letter-spacing:-0.133px;">9 changes</div>
<div class="t" style="left:1557.60px;top:365.50px;font-size:13px;color:#9ca3af;letter-spacing:-0.100px;">5 items</div>
<div class="b" style="left:955.5px;top:394px;width:643.5px;height:459px;border:1px solid #e5e7eb;border-radius:7px;box-sizing:border-box;background:#fff;overflow:hidden;"></div>
<div class="b" style="left:956.5px;top:395px;width:641.5px;height:32px;background:#f9fafb;border-radius:6px 6px 0 0;"></div>
<div class="b" style="left:956px;top:427px;width:642.5px;height:1px;background:#e5e7eb;"></div>
<div class="t" style="left:968.00px;top:404.10px;font-size:13px;color:#4b5563;letter-spacing:0.095px;-webkit-text-stroke:0.3px #4b5563;">Unit</div>
<div class="t" style="left:1039.00px;top:404.10px;font-size:13px;color:#4b5563;letter-spacing:0.228px;-webkit-text-stroke:0.3px #4b5563;">Total</div>
<div class="t" style="left:1098.20px;top:404.10px;font-size:13px;color:#4b5563;letter-spacing:0.148px;-webkit-text-stroke:0.3px #4b5563;">Quantity</div>
<div class="t" style="left:1171.80px;top:404.10px;font-size:13px;color:#4b5563;letter-spacing:0.149px;-webkit-text-stroke:0.3px #4b5563;">Unit price</div>
<div class="t" style="left:1252.00px;top:404.10px;font-size:13px;color:#4b5563;letter-spacing:0.143px;-webkit-text-stroke:0.3px #4b5563;">Description</div>
<div class="t" style="left:1449.80px;top:404.10px;font-size:13px;color:#4b5563;letter-spacing:0.030px;-webkit-text-stroke:0.3px #4b5563;">Line number</div>
<div class="b" style="left:1159.6px;top:428px;width:80.60000000000014px;height:96px;background:#f5f7fc;"></div>
<div class="t" style="left:968.00px;top:467.90px;font-size:15px;color:#111827;">pcs</div>
<div class="t" style="left:1039.00px;top:467.90px;font-size:15px;color:#111827;">8400</div>
<div class="t" style="left:1098.20px;top:467.90px;font-size:15px;color:#111827;">2</div>
<div class="t" style="left:1171.80px;top:467.90px;font-size:15px;color:#111827;">4.200</div>
<div class="t" style="left:1449.80px;top:467.90px;font-size:15px;color:#111827;">1</div>
<div class="t" style="left:1252.00px;top:438.30px;font-size:15px;color:#111827;">Industrial IoT Gateway -</div>
<div class="t" style="left:1252.00px;top:458.30px;font-size:15px;color:#111827;">Siemens SIMATIC</div>
<div class="t" style="left:1252.00px;top:478.30px;font-size:15px;color:#111827;">IOT2050 with 8GB</div>
<div class="t" style="left:1252.00px;top:498.30px;font-size:15px;color:#111827;">RAM/64GB SSD</div>
<div class="b" style="left:956px;top:524px;width:642.5px;height:1px;background:#e5e7eb;"></div>
<div class="t" style="left:968.00px;top:555.30px;font-size:15px;color:#111827;">pcs</div>
<div class="t" style="left:1039.00px;top:555.30px;font-size:15px;color:#111827;">3400</div>
<div class="t" style="left:1098.20px;top:555.30px;font-size:15px;color:#111827;">4</div>
<div class="t" style="left:1171.80px;top:555.30px;font-size:15px;color:#111827;">850</div>
<div class="t" style="left:1449.80px;top:555.30px;font-size:15px;color:#111827;">2</div>
<div class="t" style="left:1252.00px;top:535.10px;font-size:15px;color:#111827;">Vibration Analysis Sensor</div>
<div class="t" style="left:1252.00px;top:555.10px;font-size:15px;color:#111827;">Array - IFM VSA001 with</div>
<div class="t" style="left:1252.00px;top:575.10px;font-size:15px;color:#111827;">4- 20mA output</div>
<div class="b" style="left:956px;top:601.2px;width:642.5px;height:1.0px;background:#e5e7eb;"></div>
<div class="t" style="left:968.00px;top:641.70px;font-size:15px;color:#111827;">license</div>
<div class="t" style="left:1039.00px;top:641.70px;font-size:15px;color:#111827;">3600</div>
<div class="t" style="left:1098.20px;top:641.70px;font-size:15px;color:#111827;">3</div>
<div class="t" style="left:1171.80px;top:641.70px;font-size:15px;color:#111827;">1200</div>
<div class="t" style="left:1449.80px;top:641.70px;font-size:15px;color:#111827;">3</div>
<div class="t" style="left:1252.00px;top:612.30px;font-size:15px;color:#111827;">Predictive Maintenance</div>
<div class="t" style="left:1252.00px;top:632.30px;font-size:15px;color:#111827;">Software License -</div>
<div class="t" style="left:1252.00px;top:652.30px;font-size:15px;color:#111827;">Annual subscription for 3</div>
<div class="t" style="left:1252.00px;top:672.30px;font-size:15px;color:#111827;">users</div>
<div class="b" style="left:956px;top:698.6px;width:642.5px;height:1.0px;background:#e5e7eb;"></div>
<div class="t" style="left:968.00px;top:728.90px;font-size:15px;color:#111827;">pcs</div>
<div class="t" style="left:1039.00px;top:728.90px;font-size:15px;color:#111827;">3500</div>
<div class="t" style="left:1098.20px;top:728.90px;font-size:15px;color:#111827;">1</div>
<div class="t" style="left:1171.80px;top:728.90px;font-size:15px;color:#111827;">3500</div>
<div class="t" style="left:1449.80px;top:728.90px;font-size:15px;color:#111827;">4</div>
<div class="t" style="left:1252.00px;top:708.70px;font-size:15px;color:#111827;">Thermal Imaging Camera</div>
<div class="t" style="left:1252.00px;top:728.70px;font-size:15px;color:#111827;">- FLIR E8-XT with WiFi</div>
<div class="t" style="left:1252.00px;top:748.70px;font-size:15px;color:#111827;">connectivity</div>
<div class="b" style="left:956.5px;top:776.4px;width:641.5px;height:75.60000000000002px;background:#f6fbf8;border-radius:0 0 6px 6px;"></div>
<div class="b" style="left:956px;top:775.4px;width:642.5px;height:1.0px;background:#e5e7eb;"></div>
<div class="t" style="left:968.00px;top:806.10px;font-size:15px;color:#111827;">pcs</div>
<div class="t" style="left:1039.00px;top:806.10px;font-size:15px;color:#111827;">1500</div>
<div class="t" style="left:1098.20px;top:806.10px;font-size:15px;color:#111827;">1</div>
<div class="t" style="left:1171.80px;top:806.10px;font-size:15px;color:#111827;">3000</div>
<div class="t" style="left:1449.80px;top:806.10px;font-size:15px;color:#111827;">5</div>
<div class="t" style="left:1252.00px;top:785.90px;font-size:15px;color:#111827;">Vibration Analysis Sensor</div>
<div class="t" style="left:1252.00px;top:805.90px;font-size:15px;color:#111827;">Array - IFM VSA001 with</div>
<div class="t" style="left:1252.00px;top:825.90px;font-size:15px;color:#111827;">4- 10mA output</div>
<div class="b" style="left:955.5px;top:861.9px;width:107.5px;height:17.1px;overflow:hidden;"><div style="position:absolute;left:0;top:0;width:107.5px;height:30px;border:1px dashed #d1d5db;border-radius:7px;box-sizing:border-box;"></div></div>
<div class="b" style="left:940px;top:862px;width:140px;height:17px;overflow:hidden;">
<svg class="i" style="left:29px;top:7.5px;" width="11" height="11" viewBox="0 0 24 24" fill="none" stroke="#4b5563" stroke-width="2.2" stroke-linecap="round" stroke-linejoin="round"><path d="M5 12h14"/><path d="M12 5v14"/></svg>
<div class="t" style="left:46.4px;top:6.50px;font-size:13px;color:#4b5563;-webkit-text-stroke:0.3px #4b5563;letter-spacing:0px;">Add Article</div>
</div>
<!--RIGHT-->
<div class="b" style="left:1629px;top:105px;width:1px;height:774px;background:#e5e7eb;"></div>
<div class="t" style="left:1646.20px;top:124.00px;font-size:15px;color:#111827;letter-spacing:-0.035px;-webkit-text-stroke:0.5px #111827;">Changes</div>
<div class="b" style="left:1714px;top:122px;width:28px;height:19.69999999999999px;background:#f3f4f6;border-radius:6px;"></div>
<div class="t" style="left:1720.75px;top:125.62px;font-size:12.5px;color:#4b5563;letter-spacing:0.298px;-webkit-text-stroke:0.2px #4b5563;">10</div>
<div class="b" style="left:1750px;top:122px;width:38.59999999999991px;height:19.69999999999999px;background:#fdf6e4;border-radius:6px;"></div>
<div class="t" style="left:1756.30px;top:125.56px;font-size:12.8px;color:#8f6232;letter-spacing:0.127px;-webkit-text-stroke:0.2px #8f6232;">71%</div>
<svg class="i" style="left:1880px;top:125px;" width="14" height="14" viewBox="0 0 24 24" fill="none" stroke="#6b7280" stroke-width="1.8" stroke-linecap="round" stroke-linejoin="round"><path d="M18 6 6 18"/><path d="m6 6 12 12"/></svg>
<div class="b" style="left:1631px;top:145px;width:286px;height:13px;background:#fefcf7;"></div>
<div class="b" style="left:1630px;top:158px;width:287px;height:1px;background:#e5e7eb;"></div>
<div class="b" style="left:1911px;top:158.6px;width:6px;height:554.0px;background:#cfcfcf;border-radius:3px;"></div>
<div class="b" style="left:1651px;top:176.8px;width:6px;height:6.0px;background:#3b82f6;border-radius:50%;"></div>
<div class="t" style="left:1674.00px;top:173.78px;font-size:14.2px;color:#111827;letter-spacing:0.169px;">Articles · Row 5 · Line</div>
<div class="t" style="left:1674.00px;top:193.28px;font-size:14.2px;color:#111827;letter-spacing:0.236px;">Number</div>
<div class="t" style="left:1848.94px;top:175.22px;font-size:12.5px;color:#9ca3af;">just now</div>
<div class="t" style="left:1674.00px;top:214.12px;font-size:12.5px;color:#9ca3af;">Edited · Kilian Sorg</div>
<svg class="i" style="left:1680px;top:236.5px;" width="11" height="11" viewBox="0 0 24 24" fill="none" stroke="#c5c9d0" stroke-width="2" stroke-linecap="round" stroke-linejoin="round"><path d="M5 12h14"/><path d="m12 5 7 7-7 7"/></svg>
<div class="t" style="left:1696.80px;top:235.42px;font-size:12.5px;color:#1f2937;-webkit-text-stroke:0.25px #1f2937;">5</div>
<div class="b" style="left:1630px;top:261.0px;width:281px;height:1.0px;background:#eef0f2;"></div>
<div class="b" style="left:1651px;top:280.6px;width:6px;height:6.0px;background:#3b82f6;border-radius:50%;"></div>
<div class="t" style="left:1674.00px;top:276.78px;font-size:14.2px;color:#111827;letter-spacing:0.168px;">Articles · Row 5 ·</div>
<div class="t" style="left:1674.00px;top:296.28px;font-size:14.2px;color:#111827;letter-spacing:0.181px;">Description</div>
<div class="t" style="left:1848.94px;top:278.22px;font-size:12.5px;color:#9ca3af;">just now</div>
<div class="t" style="left:1674.00px;top:317.42px;font-size:12.5px;color:#9ca3af;">Edited · Kilian Sorg</div>
<svg class="i" style="left:1680px;top:339.5px;" width="11" height="11" viewBox="0 0 24 24" fill="none" stroke="#c5c9d0" stroke-width="2" stroke-linecap="round" stroke-linejoin="round"><path d="M5 12h14"/><path d="m12 5 7 7-7 7"/></svg>
<div class="t" style="left:1696.80px;top:338.42px;font-size:12.5px;color:#1f2937;letter-spacing:0.202px;-webkit-text-stroke:0.25px #1f2937;">Vibration A...</div>
<div class="b" style="left:1630px;top:364.79999999999995px;width:281px;height:1.0px;background:#eef0f2;"></div>
<div class="b" style="left:1651px;top:383.6px;width:6px;height:6.0px;background:#3b82f6;border-radius:50%;"></div>
<div class="t" style="left:1674.00px;top:379.98px;font-size:14.2px;color:#111827;letter-spacing:0.167px;">Articles · Row 5 · Unit</div>
<div class="t" style="left:1674.00px;top:399.48px;font-size:14.2px;color:#111827;letter-spacing:0.181px;">Price</div>
<div class="t" style="left:1848.94px;top:381.42px;font-size:12.5px;color:#9ca3af;">just now</div>
<div class="t" style="left:1674.00px;top:420.62px;font-size:12.5px;color:#9ca3af;">Edited · Kilian Sorg</div>
<svg class="i" style="left:1680px;top:443.2px;" width="11" height="11" viewBox="0 0 24 24" fill="none" stroke="#c5c9d0" stroke-width="2" stroke-linecap="round" stroke-linejoin="round"><path d="M5 12h14"/><path d="m12 5 7 7-7 7"/></svg>
<div class="t" style="left:1696.80px;top:442.12px;font-size:12.5px;color:#1f2937;letter-spacing:0.278px;-webkit-text-stroke:0.25px #1f2937;">3000</div>
<div class="b" style="left:1630px;top:468.4px;width:281px;height:1.0px;background:#eef0f2;"></div>
<div class="b" style="left:1651px;top:487.7px;width:6px;height:6.0px;background:#3b82f6;border-radius:50%;"></div>
<div class="t" style="left:1674.00px;top:483.08px;font-size:14.2px;color:#111827;letter-spacing:0.168px;">Articles · Row 5 ·</div>
<div class="t" style="left:1674.00px;top:502.58px;font-size:14.2px;color:#111827;letter-spacing:0.185px;">Quantity</div>
<div class="t" style="left:1848.94px;top:484.52px;font-size:12.5px;color:#9ca3af;">just now</div>
<div class="t" style="left:1674.00px;top:524.12px;font-size:12.5px;color:#9ca3af;">Edited · Kilian Sorg</div>
<svg class="i" style="left:1680px;top:547.1px;" width="11" height="11" viewBox="0 0 24 24" fill="none" stroke="#c5c9d0" stroke-width="2" stroke-linecap="round" stroke-linejoin="round"><path d="M5 12h14"/><path d="m12 5 7 7-7 7"/></svg>
<div class="t" style="left:1696.80px;top:546.02px;font-size:12.5px;color:#1f2937;-webkit-text-stroke:0.25px #1f2937;">1</div>
<div class="b" style="left:1630px;top:571.6999999999999px;width:281px;height:1.0px;background:#eef0f2;"></div>
<div class="b" style="left:1651px;top:591px;width:6px;height:6px;background:#3b82f6;border-radius:50%;"></div>
<div class="t" style="left:1674.00px;top:586.78px;font-size:14.2px;color:#111827;letter-spacing:0.165px;">Articles · Row 5 · Total</div>
<div class="t" style="left:1848.94px;top:588.22px;font-size:12.5px;color:#9ca3af;">just now</div>
<div class="t" style="left:1674.00px;top:608.92px;font-size:12.5px;color:#9ca3af;">Edited · Kilian Sorg</div>
<svg class="i" style="left:1680px;top:631.8px;" width="11" height="11" viewBox="0 0 24 24" fill="none" stroke="#c5c9d0" stroke-width="2" stroke-linecap="round" stroke-linejoin="round"><path d="M5 12h14"/><path d="m12 5 7 7-7 7"/></svg>
<div class="t" style="left:1696.80px;top:630.72px;font-size:12.5px;color:#1f2937;letter-spacing:0.278px;-webkit-text-stroke:0.25px #1f2937;">1500</div>
<div class="b" style="left:1630px;top:656.0px;width:281px;height:1.0px;background:#eef0f2;"></div>
<div class="b" style="left:1651px;top:675.6px;width:6px;height:6.0px;background:#3b82f6;border-radius:50%;"></div>
<div class="t" style="left:1674.00px;top:670.98px;font-size:14.2px;color:#111827;letter-spacing:0.167px;">Articles · Row 5 · Unit</div>
<div class="t" style="left:1853.11px;top:672.42px;font-size:12.5px;color:#9ca3af;">1m ago</div>
<div class="t" style="left:1674.00px;top:693.12px;font-size:12.5px;color:#9ca3af;">Edited · Kilian Sorg</div>
<svg class="i" style="left:1680px;top:716.0px;" width="11" height="11" viewBox="0 0 24 24" fill="none" stroke="#c5c9d0" stroke-width="2" stroke-linecap="round" stroke-linejoin="round"><path d="M5 12h14"/><path d="m12 5 7 7-7 7"/></svg>
<div class="t" style="left:1696.80px;top:714.92px;font-size:12.5px;color:#1f2937;letter-spacing:0.259px;-webkit-text-stroke:0.25px #1f2937;">pcs</div>
<div class="b" style="left:1630px;top:739.8px;width:281px;height:1.0px;background:#eef0f2;"></div>
<div class="b" style="left:1651px;top:759.5px;width:6px;height:6.0px;background:#22c55e;border-radius:50%;"></div>
<div class="t" style="left:1674.00px;top:755.98px;font-size:14.2px;color:#111827;letter-spacing:0.163px;">Articles</div>
<div class="t" style="left:1853.11px;top:757.42px;font-size:12.5px;color:#9ca3af;">1m ago</div>
<div class="t" style="left:1674.00px;top:777.12px;font-size:12.5px;color:#9ca3af;">Added · Kilian Sorg</div>
<div class="b" style="left:1630px;top:803.3px;width:281px;height:1.0px;background:#eef0f2;"></div>
<div class="b" style="left:1651px;top:822px;width:6px;height:6px;background:#3b82f6;border-radius:50%;"></div>
<div class="t" style="left:1674.00px;top:818.18px;font-size:14.2px;color:#111827;letter-spacing:0.210px;">Vendor</div>
<div class="t" style="left:1853.11px;top:819.62px;font-size:12.5px;color:#9ca3af;">1m ago</div>
<div class="t" style="left:1674.00px;top:838.72px;font-size:12.5px;color:#9ca3af;">Edited · Kilian Sorg</div>
<div class="t" style="left:1674.40px;top:860.92px;font-size:12.5px;color:#9ca3af;letter-spacing:0.157px;text-decoration:line-through;">{&quot;vendor_n...</div>
<svg class="i" style="left:1759px;top:862.0px;" width="11" height="11" viewBox="0 0 24 24" fill="none" stroke="#c5c9d0" stroke-width="2" stroke-linecap="round" stroke-linejoin="round"><path d="M5 12h14"/><path d="m12 5 7 7-7 7"/></svg>
<div class="t" style="left:1777.20px;top:860.92px;font-size:12.5px;color:#1f2937;letter-spacing:0.296px;-webkit-text-stroke:0.25px #1f2937;">{&quot;vendor_n...</div>
<div class="b" style="left:237px;top:879px;width:1680px;height:1px;background:#e5e7eb;"></div>
<div class="b" style="left:237px;top:880px;width:1680px;height:72px;background:#fff;"></div>
<div class="b" style="left:237px;top:902px;width:1680px;height:50px;background:#fdfcf8;"></div>
<div class="b" style="left:261px;top:912.5px;width:7px;height:7.0px;background:#3b82f6;border-radius:50%;"></div>
<div class="t" style="left:277.00px;top:909.20px;font-size:13px;color:#1f2937;letter-spacing:0.120px;-webkit-text-stroke:0.5px #1f2937;">10</div>
<div class="t" style="left:295.50px;top:909.20px;font-size:13px;color:#374151;letter-spacing:-0.232px;">changes made</div>
<div class="b" style="left:1587.6px;top:895.9px;width:83.0px;height:39.80000000000007px;background:#fffdf8;border:1px solid #f0d9bd;border-radius:7px;box-sizing:border-box;"></div>
<div class="t" style="left:1609.10px;top:908.30px;font-size:15px;color:#c43a1e;letter-spacing:-0.420px;-webkit-text-stroke:0.3px #c43a1e;">Reject</div>
<div class="b" style="left:1678.9px;top:895.9px;width:213.5px;height:39.80000000000007px;background:#3263e2;border-radius:7px;"></div>
<svg class="i" style="left:1698px;top:909px;" width="14" height="14" viewBox="0 0 24 24" fill="none" stroke="#fff" stroke-width="2.4" stroke-linecap="round" stroke-linejoin="round"><path d="M20 6 9 17l-5-5"/></svg>
<div class="t" style="left:1721.30px;top:908.30px;font-size:15px;color:#fff;letter-spacing:0.004px;-webkit-text-stroke:0.4px #fff;">Approve with Changes</div>
</body></html>
